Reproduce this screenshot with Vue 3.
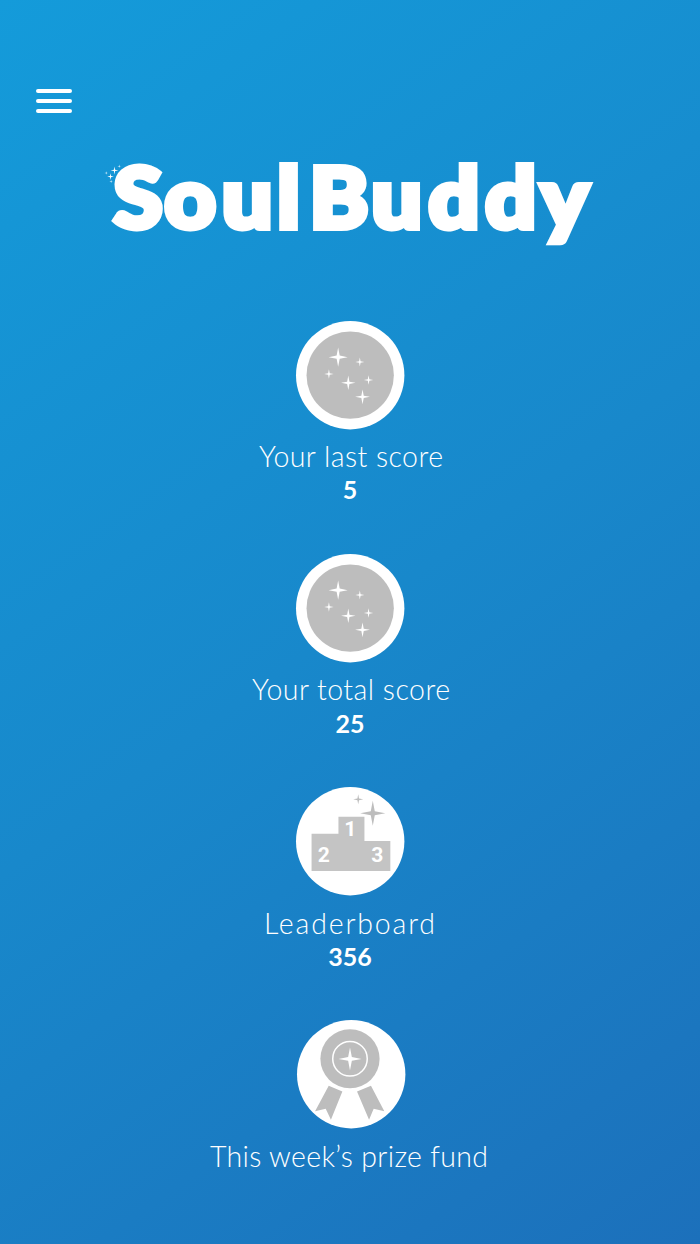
<script setup>
const stats = [
  { icon: "stars", label: "Your last score", value: "5", x: 0, width: 184 },
  { icon: "stars", label: "Your total score", value: "25", x: 0, width: 198 },
  { icon: "podium", label: "Leaderboard", value: "356", x: -1, width: 171 },
  { icon: "ribbon", label: "This week’s prize fund", value: "", x: -2, width: 278 },
];

// each star is [x, y, radius]
const medalStars = [
  [42, 36, 9.5],
  [63.6, 40.8, 4.5],
  [32.8, 52.9, 4.7],
  [52.1, 61.6, 7.2],
  [72.3, 58.8, 4.7],
  [66.3, 75.6, 7.4],
];

const logoStars = [
  [114.5, 170.4, 4],
  [110.5, 176.6, 3.3],
  [119.2, 166.2, 1.8],
  [106.2, 173, 1.8],
  [111.1, 181.5, 1.8],
];

function star([x, y, r]) {
  const k = r * 0.16;
  return `M${x} ${y - r}L${x + k} ${y - k}L${x + r} ${y}L${x + k} ${y + k}L${x} ${y + r}L${x - k} ${y + k}L${x - r} ${y}L${x - k} ${y - k}Z`;
}
</script>

<template>
  <main class="screen">
    <header class="topbar">
      <button class="menu" aria-label="Menu">
        <span></span>
        <span></span>
        <span></span>
      </button>
    </header>

    <h1 class="logo">
      <svg viewBox="95 145 510 115" width="510" height="115">
        <path v-for="(s, i) in logoStars" :key="i" :d="star(s)" />
        <text
          transform="scale(1.06 1)"
          y="228.5"
          x="107 155.2 209.5 261.5 292 350.5 404.3 457.8 510.3"
        >
          SoulBuddy
        </text>
      </svg>
    </h1>

    <section class="stats">
      <article
        v-for="item in stats"
        :key="item.label"
        class="stat"
        :class="item.icon"
      >
        <svg class="badge" viewBox="0 0 108 108">
          <circle cx="54" cy="54" r="54" fill="#fff" />
          <g v-if="item.icon === 'stars'">
            <circle cx="54" cy="54" r="43.5" fill="#bdbdbd" />
            <path
              v-for="(s, i) in medalStars"
              :key="i"
              :d="star(s)"
              fill="#fff"
            />
          </g>
          <g v-else-if="item.icon === 'podium'">
            <path
              d="M15.5 46.7H42.3V29.6H68.2V53.7H94V83.6H15.5Z"
              fill="#c4c4c4"
            />
            <path :d="star([62, 12.3, 5])" fill="#bdbdbd" />
            <path :d="star([76.5, 26.2, 12.5])" fill="#bdbdbd" />
            <g class="places">
              <text x="54" y="49">1</text>
              <text x="27.6" y="75">2</text>
              <text x="81" y="75">3</text>
            </g>
          </g>
          <g v-else fill="#bdbdbd">
            <circle cx="52.8" cy="38.6" r="29.5" />
            <circle
              cx="52.8"
              cy="38.6"
              r="17.2"
              fill="none"
              stroke="#fff"
              stroke-width="1.5"
            />
            <path :d="star([52.8, 38.8, 11.5])" fill="#fff" />
            <path d="M31.6 65.5L45.2 71.3L33.8 99.5L28.6 88.5L18 91Z" />
            <path d="M73.7 65.5L59.8 71.3L71.8 99.5L76.4 88.5L87 91Z" />
          </g>
        </svg>
        <svg class="label" :width="item.width" height="34">
          <text
            :x="item.x"
            y="27"
            :textLength="item.width"
            lengthAdjust="spacing"
          >
            {{ item.label }}
          </text>
        </svg>
        <strong v-if="item.value" class="value">{{ item.value }}</strong>
      </article>
    </section>
  </main>
</template>

<style>
body {
  margin: 0;
}
</style>

<style scoped>
.screen {
  box-sizing: border-box;
  width: 100%;
  height: 1244px;
  padding-top: 89px;
  overflow: hidden;
  color: #fff;
  font-family: Lato, sans-serif;
  background: linear-gradient(144deg, #149bda 0%, #1888cb 50%, #1c70bb 100%);
}

.topbar {
  height: 56px;
  padding-left: 36px;
}

.menu {
  display: flex;
  flex-direction: column;
  gap: 6px;
  width: 36px;
  padding: 0;
  border: 0;
  background: none;
}

.menu span {
  height: 4px;
  border-radius: 2px;
  background: #fff;
}

.logo {
  height: 115px;
  margin: 0 0 0 95px;
}

.logo svg {
  display: block;
  overflow: visible;
  fill: #fff;
  font-size: 84px;
  font-weight: 900;
}

.logo text {
  stroke: #fff;
  stroke-width: 6px;
}

.stats {
  display: flex;
  flex-direction: column;
  padding-top: 60.6px;
}

.stat {
  display: flex;
  flex-direction: column;
  align-items: center;
  height: 233.3px;
}

.badge {
  width: 108.4px;
  height: 108.4px;
  margin-right: 0.5px;
  overflow: visible;
}

.ribbon .badge {
  margin-right: 0;
  margin-left: 3px;
}

.places {
  fill: #fff;
  font-family: Roboto, sans-serif;
  font-size: 21px;
  font-weight: 700;
  text-anchor: middle;
}

.label {
  margin-top: 11px;
  margin-left: 1px;
  overflow: visible;
  fill: #fff;
  font-size: 28.5px;
  font-weight: 300;
}

.value {
  margin-top: -1.5px;
  font-size: 25px;
  font-weight: 700;
  line-height: 34px;
}
</style>
